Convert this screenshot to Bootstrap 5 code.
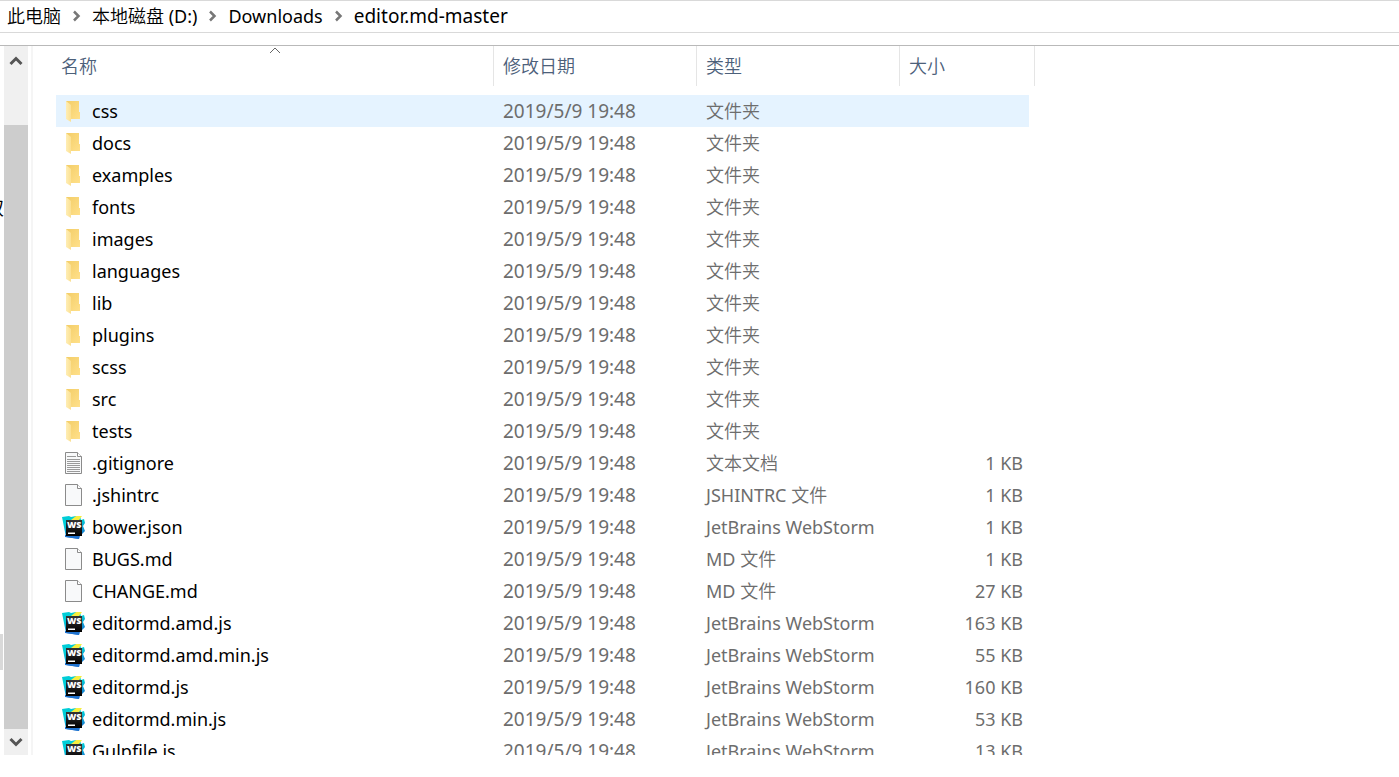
<!DOCTYPE html>
<html lang="zh-CN">
<head>
<meta charset="utf-8">
<meta name="viewport" content="width=device-width, initial-scale=1">
<title>editor.md-master</title>
<link href="https://cdn.jsdelivr.net/npm/bootstrap@5.3.0/dist/css/bootstrap.min.css" rel="stylesheet">
<style>
body{font-family:"Noto Sans","Noto Sans CJK SC",sans-serif;font-size:18px;line-height:24px;color:#000}
.address-bar{height:33px;border-top:1px solid #d9d9d9;border-bottom:1px solid #d9d9d9;margin-bottom:12px;padding:0 7px 2px}
.address-bar .breadcrumb{gap:10px}
.address-bar a{color:#000}
.address-bar a:last-child{font-size:19px}
.explorer{border-top:1px solid #b9b9b9;margin-bottom:22px;min-height:0}
.cjk{font-weight:350}
.nav-sliver{width:4px}
.nav-sliver span{margin-top:150px}
.nav-sliver i{width:3px;height:36px;margin-top:414px;background:#d9d9d9}
.scroll-rail{width:24px;background:#f0f0f0}
.scroll-rail button{height:26px;width:24px}
.scroll-rail button:first-child{padding-top:4px!important}
.scroll-thumb{background:#cdcdcd}
.pane-edge{width:2px;margin-left:3px;background:#f5f5f5}
.file-pane{padding-left:23px}
.file-table{width:979px;table-layout:fixed;border-collapse:separate;border-spacing:0}
.file-table th{padding:0 0 9px;font-weight:400}
.file-table th>div{height:40px;border-right:1px solid #e5e5e5}
.file-table th.plain>div{border-right:0}
.file-table .head-btn{color:#4c607a;padding:0 9px;font-size:18px;line-height:24px;font-weight:350}
.file-table th:first-child .head-btn{padding-left:5px}
.file-table td{height:32px;padding:0 9px;color:#6d6d6d;white-space:nowrap}
.file-table td:first-child{padding-left:5px;color:#000}
.file-table td:nth-child(4){padding-right:6px;text-align:right}
.file-table td:nth-child(5){padding:0}
.file-table .picked td:not(:last-child){background:#e5f3ff}
.file-table td svg{width:24px;height:24px;margin-right:7px;vertical-align:top}
.file-table .stamp{font-size:19px}
.sort-mark{left:50%;top:0;transform:translateX(-50%)}
</style>
</head>
<body class="vh-100 d-flex flex-column overflow-hidden bg-white">
<svg class="position-absolute" width="0" height="0" aria-hidden="true">
<defs>
<linearGradient id="gBack" x2="1" y2="1"><stop stop-color="#f3cd67"/><stop offset="1" stop-color="#ffe08a"/></linearGradient>
<linearGradient id="gFlap" x2="1"><stop stop-color="#ffeeb5"/><stop offset="1" stop-color="#fbe092"/></linearGradient>
<linearGradient id="gWs" y1="0" x2=".3" y2="1"><stop offset=".4" stop-color="#00cdd7"/><stop offset="1" stop-color="#1b76d0"/></linearGradient>
<linearGradient id="gBlack" x2="0" y2="1"><stop stop-color="#333"/><stop offset="1" stop-color="#000"/></linearGradient>
<symbol id="folder" viewBox="0 0 24 24"><path fill="url(#gBack)" d="M5 2h13v11h1v7H8L5 18z"/><path fill="url(#gFlap)" d="M5 2l5 4v17l-5-3z"/></symbol>
<symbol id="page" viewBox="0 0 24 24"><path fill="#f8f9fa" stroke="#8b8b8b" d="M4.500 1.500h12l4 4v17h-16z"/><path fill="#fff" stroke="#8b8b8b" d="M16.500 1.500v4h4"/></symbol>
<symbol id="text" viewBox="0 0 24 24"><use href="#page"/><path stroke="#9a9a9a" d="M6 5.500h9M6 8.500h13M6 10.500h13M6 12.500h13M6 14.500h13M6 16.500h13M6 18.500h13M6 20.500h13"/></symbol>
<symbol id="ws" viewBox="0 0 24 24"><path fill="url(#gWs)" d="M1 2l7-1 2 1 5-1h4l1 4 3-1 1 4-2 3 2 5-3 3-2 0-1 5-13-2z"/><path fill="#f8ee3f" d="M15 1h6l-3 4h-8z"/><path fill="#1f72cf" d="M4 20h15l-1 4-14-2z"/><path fill="url(#gBlack)" d="M5 5h16v16H5z"/><path fill="#fff" d="M7 17.500h7v1.500H7z"/><text x="6" y="13" font-family="Open Sans, sans-serif" font-weight="800" font-size="9" fill="#fff">WS</text></symbol>
<symbol id="crumb" viewBox="0 0 11 12"><path fill="none" stroke="#777" stroke-width="2.500" d="M3 1.500l4.500 4.500L3 10.500"/></symbol>
</defs>
</svg>

<nav class="address-bar d-flex align-items-center flex-shrink-0" aria-label="路径">
<div class="breadcrumb mb-0 flex-nowrap align-items-center text-nowrap">
<a class="text-decoration-none cjk" href="#">此电脑</a><svg width="11" height="12"><use href="#crumb"/></svg>
<a class="text-decoration-none" href="#"><span class="cjk">本地磁盘</span> (D:)</a><svg width="11" height="12"><use href="#crumb"/></svg>
<a class="text-decoration-none" href="#">Downloads</a><svg width="11" height="12"><use href="#crumb"/></svg>
<a class="text-decoration-none" href="#">editor.md-master</a>
</div>
</nav>

<main class="explorer d-flex flex-fill overflow-hidden">
<aside class="nav-sliver d-flex flex-column align-items-end overflow-hidden flex-shrink-0"><span>双</span><i class="align-self-start flex-shrink-0"></i></aside>
<div class="scroll-rail d-flex flex-column flex-shrink-0">
<button class="btn p-0 border-0 d-flex align-items-center justify-content-center" aria-label="向上滚动"><svg width="14" height="12"><path fill="none" stroke="#555" stroke-width="3" d="M1.500 9L7 3.500 12.500 9"/></svg></button>
<div class="flex-fill overflow-hidden d-flex flex-column justify-content-end"><div class="scroll-thumb" style="height:92%"></div></div>
<button class="btn p-0 border-0 d-flex align-items-center justify-content-center" aria-label="向下滚动"><svg width="14" height="12"><path fill="none" stroke="#555" stroke-width="3" d="M1.500 3L7 8.500 12.500 3"/></svg></button>
</div>
<div class="pane-edge flex-shrink-0"></div>
<section class="file-pane flex-fill overflow-hidden">
<table class="file-table">
<colgroup><col style="width:438px"><col style="width:203px"><col style="width:203px"><col style="width:129px"><col style="width:6px"></colgroup>
<thead><tr>
<th><div class="position-relative d-flex align-items-center"><svg class="sort-mark position-absolute" width="12" height="8"><path fill="none" stroke="#666" d="M1 7l5-5 5 5"/></svg><button class="btn border-0 rounded-0 head-btn">名称</button></div></th>
<th><div class="d-flex align-items-center"><button class="btn border-0 rounded-0 head-btn">修改日期</button></div></th>
<th><div class="d-flex align-items-center"><button class="btn border-0 rounded-0 head-btn">类型</button></div></th>
<th class="plain"><div class="d-flex align-items-center"><button class="btn border-0 rounded-0 head-btn">大小</button></div></th>
<th><div></div></th>
</tr></thead>
<tbody>
<tr class="picked"><td><svg><use href="#folder"/></svg>css</td><td class="stamp">2019/5/9 19:48</td><td class="cjk">文件夹</td><td></td><td></td></tr>
<tr><td><svg><use href="#folder"/></svg>docs</td><td class="stamp">2019/5/9 19:48</td><td class="cjk">文件夹</td><td></td><td></td></tr>
<tr><td><svg><use href="#folder"/></svg>examples</td><td class="stamp">2019/5/9 19:48</td><td class="cjk">文件夹</td><td></td><td></td></tr>
<tr><td><svg><use href="#folder"/></svg>fonts</td><td class="stamp">2019/5/9 19:48</td><td class="cjk">文件夹</td><td></td><td></td></tr>
<tr><td><svg><use href="#folder"/></svg>images</td><td class="stamp">2019/5/9 19:48</td><td class="cjk">文件夹</td><td></td><td></td></tr>
<tr><td><svg><use href="#folder"/></svg>languages</td><td class="stamp">2019/5/9 19:48</td><td class="cjk">文件夹</td><td></td><td></td></tr>
<tr><td><svg><use href="#folder"/></svg>lib</td><td class="stamp">2019/5/9 19:48</td><td class="cjk">文件夹</td><td></td><td></td></tr>
<tr><td><svg><use href="#folder"/></svg>plugins</td><td class="stamp">2019/5/9 19:48</td><td class="cjk">文件夹</td><td></td><td></td></tr>
<tr><td><svg><use href="#folder"/></svg>scss</td><td class="stamp">2019/5/9 19:48</td><td class="cjk">文件夹</td><td></td><td></td></tr>
<tr><td><svg><use href="#folder"/></svg>src</td><td class="stamp">2019/5/9 19:48</td><td class="cjk">文件夹</td><td></td><td></td></tr>
<tr><td><svg><use href="#folder"/></svg>tests</td><td class="stamp">2019/5/9 19:48</td><td class="cjk">文件夹</td><td></td><td></td></tr>
<tr><td><svg><use href="#text"/></svg>.gitignore</td><td class="stamp">2019/5/9 19:48</td><td class="cjk">文本文档</td><td>1 KB</td><td></td></tr>
<tr><td><svg><use href="#page"/></svg>.jshintrc</td><td class="stamp">2019/5/9 19:48</td><td>JSHINTRC <span class="cjk">文件</span></td><td>1 KB</td><td></td></tr>
<tr><td><svg><use href="#ws"/></svg>bower.json</td><td class="stamp">2019/5/9 19:48</td><td>JetBrains WebStorm</td><td>1 KB</td><td></td></tr>
<tr><td><svg><use href="#page"/></svg>BUGS.md</td><td class="stamp">2019/5/9 19:48</td><td>MD <span class="cjk">文件</span></td><td>1 KB</td><td></td></tr>
<tr><td><svg><use href="#page"/></svg>CHANGE.md</td><td class="stamp">2019/5/9 19:48</td><td>MD <span class="cjk">文件</span></td><td>27 KB</td><td></td></tr>
<tr><td><svg><use href="#ws"/></svg>editormd.amd.js</td><td class="stamp">2019/5/9 19:48</td><td>JetBrains WebStorm</td><td>163 KB</td><td></td></tr>
<tr><td><svg><use href="#ws"/></svg>editormd.amd.min.js</td><td class="stamp">2019/5/9 19:48</td><td>JetBrains WebStorm</td><td>55 KB</td><td></td></tr>
<tr><td><svg><use href="#ws"/></svg>editormd.js</td><td class="stamp">2019/5/9 19:48</td><td>JetBrains WebStorm</td><td>160 KB</td><td></td></tr>
<tr><td><svg><use href="#ws"/></svg>editormd.min.js</td><td class="stamp">2019/5/9 19:48</td><td>JetBrains WebStorm</td><td>53 KB</td><td></td></tr>
<tr><td><svg><use href="#ws"/></svg>Gulpfile.js</td><td class="stamp">2019/5/9 19:48</td><td>JetBrains WebStorm</td><td>13 KB</td><td></td></tr>
</tbody>
</table>
</section>
</main>
<script src="https://cdn.jsdelivr.net/npm/bootstrap@5.3.0/dist/js/bootstrap.bundle.min.js"></script>
</body>
</html>
